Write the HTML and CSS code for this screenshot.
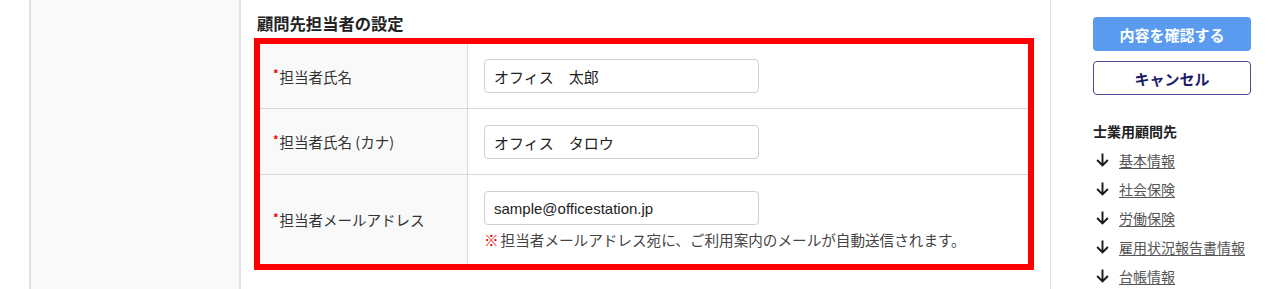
FILE: index.html
```html
<!DOCTYPE html>
<html lang="ja">
<head>
<meta charset="utf-8">
<title>顧問先担当者の設定</title>
<link rel="stylesheet" href="styles.css">
</head>
<body>
<div class="page">
  <div class="gutter"></div>
  <aside class="left-panel"></aside>
  <main class="main">
    <h2 class="section-title">顧問先担当者の設定</h2>
    <div class="highlight">
      <div class="form-table">
        <div class="row row-1">
          <div class="label"><span class="req">*</span>担当者氏名</div>
          <div class="value"><input class="text-input" type="text" value="オフィス　太郎"></div>
        </div>
        <div class="row row-2">
          <div class="label"><span class="req">*</span>担当者氏名 (カナ)</div>
          <div class="value"><input class="text-input" type="text" value="オフィス　タロウ"></div>
        </div>
        <div class="row row-3">
          <div class="label"><span class="req">*</span>担当者メールアドレス</div>
          <div class="value">
            <input class="text-input latin" type="text" value="sample@officestation.jp">
            <p class="note"><span class="note-mark">※</span>担当者メールアドレス宛に、ご利用案内のメールが自動送信されます。</p>
          </div>
        </div>
      </div>
    </div>
  </main>
  <nav class="side">
    <button class="btn btn-primary" type="button">内容を確認する</button>
    <button class="btn btn-cancel" type="button">キャンセル</button>
    <div class="side-title">士業用顧問先</div>
    <ul class="side-links">
      <li><svg class="arrow" viewBox="0 0 14 14"><path d="M7 1.5V12.5M2 7.5L7 12.5L12 7.5"/></svg><a href="#">基本情報</a></li>
      <li><svg class="arrow" viewBox="0 0 14 14"><path d="M7 1.5V12.5M2 7.5L7 12.5L12 7.5"/></svg><a href="#">社会保険</a></li>
      <li><svg class="arrow" viewBox="0 0 14 14"><path d="M7 1.5V12.5M2 7.5L7 12.5L12 7.5"/></svg><a href="#">労働保険</a></li>
      <li><svg class="arrow" viewBox="0 0 14 14"><path d="M7 1.5V12.5M2 7.5L7 12.5L12 7.5"/></svg><a href="#">雇用状況報告書情報</a></li>
      <li><svg class="arrow" viewBox="0 0 14 14"><path d="M7 1.5V12.5M2 7.5L7 12.5L12 7.5"/></svg><a href="#">台帳情報</a></li>
    </ul>
  </nav>
</div>
</body>
</html>
```

FILE: styles.css
```css
* { box-sizing: border-box; }

html, body {
  margin: 0;
  padding: 0;
  background: #ffffff;
  font-family: "Noto Sans CJK JP", "Noto Sans", sans-serif;
  color: #333333;
  overflow: hidden;
}

.page {
  display: flex;
  height: 289px;
}

.gutter {
  width: 29px;
  flex: none;
}

.left-panel {
  width: 212px;
  flex: none;
  background: #f9f9f9;
  border-left: 2px solid #e2e2e2;
  border-right: 2px solid #e2e2e2;
}

.main {
  width: 810px;
  flex: none;
  border-right: 1px solid #e2e2e2;
  padding-left: 13px;
  padding-top: 12px;
}

.section-title {
  margin: 0 0 3px 3px;
  font-size: 16.3px;
  line-height: 23px;
  font-weight: 700;
  color: #222222;
}

.highlight {
  width: 780px;
  border: 6px solid #ff0000;
}

.form-table {
  display: flex;
  flex-direction: column;
}

.row {
  display: flex;
  border-top: 1px solid #d9d9d9;
}

.row-1 { border-top: none; }

.label {
  width: 208px;
  flex: none;
  background: #f9f9f9;
  border-right: 1px solid #d9d9d9;
  padding-left: 13px;
  display: flex;
  align-items: center;
  font-size: 14.5px;
  color: #333333;
}

.req {
  color: #f00000;
  font-size: 11px;
  font-weight: 700;
  align-self: center;
  margin-top: -6px;
  margin-right: 1px;
}

.value {
  flex: 1;
  padding: 15px 16px 15px 16px;
}

.row-2 .value { padding-top: 16px; }
.row-3 .value { padding-top: 16px; padding-bottom: 14px; }

.text-input {
  display: block;
  width: 275px;
  height: 34px;
  border: 1px solid #cfcfcf;
  border-radius: 4px;
  padding: 0 9px;
  font-family: "Noto Sans CJK JP", sans-serif;
  font-size: 15px;
  color: #222222;
  background: #ffffff;
}

.text-input.latin {
  font-family: "Liberation Sans", "Noto Sans CJK JP", sans-serif;
  font-size: 15px;
}

.note {
  margin: 5px 0 0 0;
  font-size: 14.6px;
  line-height: 20px;
  color: #444444;
  white-space: nowrap;
}

.note-mark {
  color: #e60000;
  font-weight: 700;
  margin-right: 2px;
}

.side {
  padding-left: 42px;
  padding-top: 17px;
  display: flex;
  flex-direction: column;
  align-items: flex-start;
}

.side > * { flex-shrink: 0; }

.btn {
  width: 158px;
  height: 34px;
  border-radius: 4px;
  font-family: "Noto Sans CJK JP", sans-serif;
  font-size: 15px;
  font-weight: 700;
  cursor: pointer;
  padding: 0;
}

.btn-primary {
  background: #5a9bf0;
  color: #ffffff;
  border: none;
}

.btn-cancel {
  margin-top: 10px;
  background: #ffffff;
  color: #1c1c6b;
  border: 1px solid #4b4b9a;
  font-size: 15px;
}

.side-title {
  margin-top: 26px;
  font-size: 14px;
  line-height: 20px;
  font-weight: 700;
  color: #222222;
}

.side-links {
  list-style: none;
  margin: 4px 0 0 0;
  padding: 0;
}

.side-links li {
  display: flex;
  align-items: center;
  height: 29px;
}

.arrow {
  width: 15px;
  height: 15px;
  margin-left: 2px;
  margin-right: 9px;
  fill: none;
  stroke: #1a1a1a;
  stroke-width: 1.8;
}

.side-links a {
  font-size: 14px;
  color: #555555;
  text-decoration: underline;
  text-underline-offset: 2px;
}
```
